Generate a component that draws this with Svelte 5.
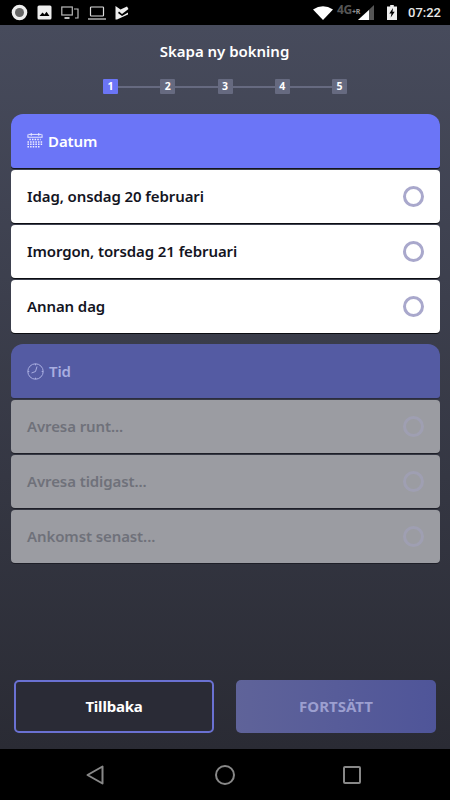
<script>
  const steps = [1, 2, 3, 4, 5];
  const dates = ['Idag, onsdag 20 februari', 'Imorgon, torsdag 21 februari', 'Annan dag'];
  const times = ['Avresa runt...', 'Avresa tidigast...', 'Ankomst senast...'];
</script>

<div class="phone">
  <header class="status">
    <div class="group left">
      <svg width="17" height="17" viewBox="0 0 17 17"><circle cx="8.5" cy="8.5" r="7.8" fill="#eee"/><circle cx="8.5" cy="8.5" r="4.5" fill="#666"/></svg>
      <svg width="15" height="15" viewBox="0 0 15 15"><rect x="0.5" y="0.5" width="14" height="14" rx="1.5" fill="#eee"/><path d="M2.5 11 L5.5 7.5 L7.5 9.5 L9.5 6.8 L12.5 11 Z" fill="#000"/></svg>
      <svg width="18" height="14" viewBox="0 0 18 14" fill="none" stroke="#bbb" stroke-width="1.2"><rect x="0.8" y="1" width="10.5" height="8"/><path d="M3.5 12 h5" stroke-width="2"/><path d="M13 3 h4 v9 h-3"/></svg>
      <svg width="18" height="14" viewBox="0 0 18 14" fill="none" stroke="#ddd" stroke-width="1.2"><rect x="2.5" y="1" width="13" height="9" rx="0.8"/><path d="M0 13 h18"/></svg>
      <svg width="14" height="15" viewBox="0 0 14 15"><path d="M0.5 1 L5.5 4.5 L12 1.5 L13.5 4 L7 9 L4 6.5 L3 8 L7 11 L13 7.5 V9.5 L2 14.5 H0.5 Z" fill="#eee"/></svg>
    </div>
    <div class="group right">
      <svg class="wifi" width="20" height="14" viewBox="0 0 20 14"><path d="M0 3.5 Q10 -3 20 3.5 L10 14 Z" fill="#fff"/></svg>
      <span class="net">4G<small>+R</small></span>
      <svg class="sig" width="16" height="15" viewBox="0 0 16 15"><path d="M16 0 V15 H0 Z" fill="#555"/><path d="M11 5 V15 H0 Z" fill="#fff"/></svg>
      <svg class="bat" width="10" height="15" viewBox="0 0 10 15"><path d="M3.2 0 h3.6 v1.5 h3.2 V15 H0 V1.5 h3.2 Z" fill="#eee"/><path d="M6 3 L2.3 8.5 H4.5 L3.7 12.5 L7.7 6.8 H5.5 Z" fill="#000"/></svg>
      <span class="clock">07:22</span>
    </div>
  </header>

  <main class="screen">
    <h1>Skapa ny bokning</h1>

    <ol class="stepper">
      {#each steps as step, i}
        {#if i > 0}<li class="line" aria-hidden="true"></li>{/if}
        <li class="step" class:active={i === 0}>{step}</li>
      {/each}
    </ol>

    <section class="card">
      <div class="card-head">
        <svg class="ico" width="16" height="16" viewBox="0 0 16 17" fill="none" stroke="#eef" stroke-width="1">
          <path d="M4 0 v3 M12 0 v3 M1 1.5 h14 M0.5 1.5 v3 M15.5 1.5 v3 M0 4.5 h16"/>
          <path d="M2 7 h12 M0 9.5 h16 M0 12 h16 M0 14.5 h13" stroke-width="1.6" stroke-dasharray="1.6 1.2"/>
        </svg>
        <span>Datum</span>
      </div>
      {#each dates as label}
        <div class="row"><span>{label}</span><i class="radio"></i></div>
      {/each}
    </section>

    <section class="card disabled">
      <div class="card-head">
        <svg class="ico" width="17" height="17" viewBox="0 0 17 17" fill="none" stroke="#a9aee0" stroke-width="1">
          <circle cx="8.5" cy="8.5" r="7.7"/>
          <path d="M10 3.5 L8.5 8.5 L4.5 10 M8.5 0.8 v1.5 M8.5 14.7 v1.5 M0.8 8.5 h1.5 M14.7 8.5 h1.5"/>
        </svg>
        <span>Tid</span>
      </div>
      {#each times as label}
        <div class="row"><span>{label}</span><i class="radio"></i></div>
      {/each}
    </section>

    <div class="actions">
      <button class="back"><span>Tillbaka</span></button>
      <button class="next"><span>FORTSÄTT</span></button>
    </div>
  </main>

  <footer class="nav">
    <svg width="18" height="20" viewBox="0 0 18 20" fill="none" stroke="#888" stroke-width="2" stroke-linejoin="round"><path d="M16.5 1.5 V18.5 L1.5 10 Z"/></svg>
    <svg width="20" height="20" viewBox="0 0 20 20" fill="none" stroke="#888" stroke-width="2"><circle cx="10" cy="10" r="9"/></svg>
    <svg width="18" height="18" viewBox="0 0 18 18" fill="none" stroke="#888" stroke-width="2" stroke-linejoin="round"><rect x="1" y="1" width="16" height="16" rx="1"/></svg>
  </footer>
</div>

<style>
  :global(body) { margin: 0; background: #000; }
  .phone {
    width: 450px;
    height: 800px;
    display: flex;
    flex-direction: column;
    font-family: "Noto Sans", "Open Sans", sans-serif;
    overflow: hidden;
  }
  .status {
    height: 25px;
    flex: none;
    background: #000;
    display: flex;
    justify-content: space-between;
    align-items: center;
    padding: 0 9px 0 11px;
  }
  .group { display: flex; align-items: center; }
  .left { gap: 9px; }
  .right { color: #eee; }
  .wifi { margin-right: 4px; }
  .net { font-size: 12px; font-weight: 700; color: #555; letter-spacing: -0.3px; width: 24px; margin-top: -6px; white-space: nowrap; }
  .net small { font-size: 7px; color: #999; }
  .sig { margin-left: -3px; margin-right: 13px; }
  .bat { margin-right: 11px; }
  .clock { font-family: Roboto, sans-serif; font-size: 13px; font-weight: 500; color: #e8e8e8; }

  .screen {
    flex: 1;
    background: linear-gradient(180deg, #474b5c 0%, #2a2b34 100%);
    display: flex;
    flex-direction: column;
    padding: 0 10px 16px 11px;
    box-sizing: border-box;
  }
  h1 {
    margin: 16px 0 0;
    height: 20px;
    line-height: 20px;
    font-size: 15px;
    font-weight: 600;
    letter-spacing: -0.02px;
    color: #fff;
    text-align: center;
    padding-right: 2px;
  }
  .stepper {
    list-style: none;
    margin: 18px 0 0 92px;
    padding: 0;
    display: flex;
    align-items: center;
    width: 244px;
  }
  .step {
    width: 15px;
    height: 15px;
    flex: none;
    background: #666a80;
    color: #fff;
    border-radius: 1px;
    font-size: 10.5px;
    font-weight: 700;
    line-height: 15px;
    text-align: center;
  }
  .step.active { background: #6b75f5; }
  .line { flex: 1; height: 2px; background: #666a80; }

  .card { margin-top: 20px; display: flex; flex-direction: column; gap: 2px; }
  .card + .card { margin-top: 11px; }
  .card-head {
    height: 54px;
    background: #6b75f7;
    border-radius: 12px 12px 3px 3px;
    display: flex;
    align-items: center;
    gap: 5px;
    padding-left: 16px;
    color: #fff;
    font-size: 15px;
    font-weight: 600;
    letter-spacing: -0.1px;
    box-shadow: 0 1px 0 #14151c;
  }
  .row {
    height: 53px;
    background: #fff;
    border-radius: 4px;
    display: flex;
    align-items: center;
    justify-content: space-between;
    padding: 0 16px;
    color: #14151f;
    font-size: 15px;
    font-weight: 600;
    letter-spacing: -0.1px;
    box-shadow: 0 1px 0 #0c0d12;
  }
  .row span { margin-bottom: 2px; }
  .radio {
    width: 15px;
    height: 15px;
    border: 3px solid #a9a8cc;
    border-radius: 50%;
    flex: none;
  }
  .disabled .card-head { background: #545ba3; color: #a9aee0; box-shadow: 0 1px 0 #2b2d3f; }
  .disabled .row { background: #9b9ca2; color: #6f717a; box-shadow: 0 1px 0 #1e1f28; }
  .disabled .radio { border-color: #9f9fb2; }

  .actions {
    margin-top: auto;
    display: flex;
    justify-content: space-between;
    padding: 0 4px 0 3px;
  }
  button {
    width: 200px;
    height: 53px;
    border-radius: 5px;
    font-family: inherit;
    font-size: 15px;
    font-weight: 700;
    letter-spacing: -0.2px;
    box-sizing: border-box;
    padding: 0 0 2px;
  }
  .back { background: #2a2b36; border: 2px solid #6a71d2; color: #fff; }
  .next { background: linear-gradient(90deg, #5f6399 0%, #4f5599 100%); border: 0; color: #9c9fd0; letter-spacing: 0; }

  .nav {
    height: 51px;
    flex: none;
    background: #000;
    display: flex;
    align-items: center;
    padding: 0 89px 0 86px;
    justify-content: space-between;
  }
  .nav svg:nth-child(2) { margin-left: 3px; }
</style>
